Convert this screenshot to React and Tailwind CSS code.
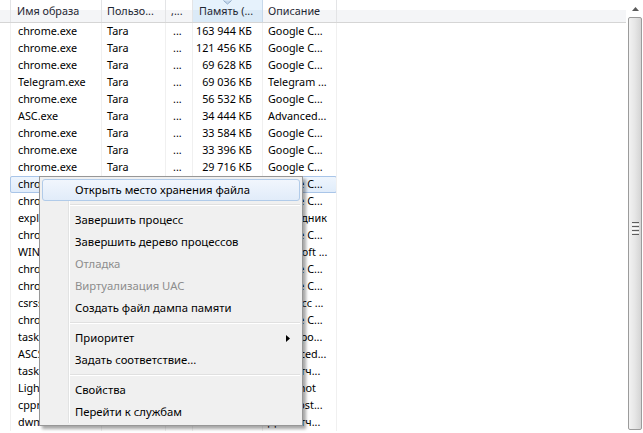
const rows = [
  ["chrome.exe", "Tara", "...", "163 944 КБ", "Google C..."],
  ["chrome.exe", "Tara", "...", "121 456 КБ", "Google C..."],
  ["chrome.exe", "Tara", "...", "69 628 КБ", "Google C..."],
  ["Telegram.exe", "Tara", "...", "69 036 КБ", "Telegram ..."],
  ["chrome.exe", "Tara", "...", "56 532 КБ", "Google C..."],
  ["ASC.exe", "Tara", "...", "34 444 КБ", "Advanced..."],
  ["chrome.exe", "Tara", "...", "33 584 КБ", "Google C..."],
  ["chrome.exe", "Tara", "...", "33 396 КБ", "Google C..."],
  ["chrome.exe", "Tara", "...", "29 716 КБ", "Google C..."],
  ["chrome.exe", "Tara", "...", "28 104 КБ", "Google C..."],
  ["chrome.exe", "Tara", "...", "26 880 КБ", "Google C..."],
  ["explorer.exe", "Tara", "...", "25 412 КБ", "Проводник"],
  ["chrome.exe", "Tara", "...", "24 960 КБ", "Google C..."],
  ["WINWORD.EXE", "Tara", "...", "21 308 КБ", "Microsoft ..."],
  ["chrome.exe", "Tara", "...", "19 744 КБ", "Google C..."],
  ["chrome.exe", "Tara", "...", "17 236 КБ", "Google C..."],
  ["csrss.exe", "", "...", "15 620 КБ", "Процесс ..."],
  ["chrome.exe", "Tara", "...", "14 092 КБ", "Google C..."],
  ["taskhost.exe", "Tara", "...", "9 868 КБ", "Хост-про..."],
  ["ASCService.exe", "", "...", "8 520 КБ", "Advanced..."],
  ["taskmgr.exe", "Tara", "...", "7 412 КБ", "Диспетч..."],
  ["Lightshot.exe", "Tara", "...", "6 980 КБ", "Lightshot"],
  ["cpprocess.exe", "Tara", "...", "5 204 КБ", "Win Host..."],
  ["dwm.exe", "Tara", "...", "3 916 КБ", "Диспетч..."],
];

function Header() {
  const cell =
    "h-full flex items-center border-r border-[#e3e4e6] text-[#1f2733] bg-[linear-gradient(to_bottom,#ffffff_0%,#ffffff_45%,#f4f5f7_45%,#f4f5f7_100%)]";
  return (
    <div className="flex h-[23px] border-b border-[#d5d5d5] shrink-0">
      <div className={`w-[11px] ${cell}`} />
      <div className={`w-[91px] pl-[6px] ${cell}`}>Имя образа</div>
      <div className={`w-[64px] pl-[5px] ${cell}`}>Пользо...</div>
      <div className={`w-[27px] pl-[5px] ${cell}`}>,...</div>
      <div className="relative w-[70px] pl-[6px] h-full flex items-center border-r border-[#c8d9ea] text-[#1f2733] bg-[linear-gradient(to_bottom,#e6f2fc_0%,#e6f2fc_45%,#dbeaf7_45%,#dbeaf7_100%)]">
        Память (...
        <svg className="absolute left-[30px] top-0" width="9" height="5" viewBox="0 0 9 5">
          <path d="M0.5 0.5 L4.5 4 L8.5 0.5" fill="#c5d8ec" stroke="#8fa9c6" strokeWidth="1" />
        </svg>
      </div>
      <div className={`w-[74px] pl-[5px] ${cell}`}>Описание</div>
      <div className="flex-1 h-full bg-[linear-gradient(to_bottom,#ffffff_0%,#ffffff_45%,#f4f5f7_45%,#f4f5f7_100%)]" />
    </div>
  );
}

function Row({ r, selected }) {
  const line = "h-full flex items-center border-r border-[#f0f0f0] overflow-hidden whitespace-nowrap";
  return (
    <div className="relative flex h-[17px] shrink-0">
      {selected && (
        <div className="absolute left-[10px] top-0 w-[327px] h-[17px] rounded-[2px] border border-[#a9c5e8] bg-linear-to-b from-[#eef5fd] to-[#e0ecfa]" />
      )}
      <div className={`w-[11px] ${line}`} />
      <div className={`relative w-[91px] pl-[7px] ${line}`}>{r[0]}</div>
      <div className={`relative w-[64px] pl-[5px] ${line}`}>{r[1]}</div>
      <div className={`relative w-[27px] pl-[7px] ${line}`}>{r[2]}</div>
      <div className={`relative w-[70px] pr-[10px] justify-end ${line}`}>{r[3]}</div>
      <div className={`relative w-[74px] pl-[5px] ${line}`}>{r[4]}</div>
      <div className="flex-1" />
    </div>
  );
}

function Scrollbar() {
  return (
    <div className="w-[17px] h-full flex flex-col bg-white">
      <div className="h-[17px] flex items-center justify-center pl-[2px]">
        <svg width="7" height="4" viewBox="0 0 7 4">
          <path d="M0 4 L3.5 0 L7 4 Z" fill="#5a5a5a" />
        </svg>
      </div>
      <div className="flex-1 ml-[2px] mr-[1px] mb-[3px] rounded-[2px] border border-[#9b9b9b] bg-linear-to-r from-[#f2f2f2] via-[#e6e6e6] to-[#d4d4d4] flex items-center justify-center">
        <div className="flex flex-col gap-[1px] mt-[10px]">
          <div className="w-[7px] h-[1px] bg-[#5e5e5e]" />
          <div className="w-[7px] h-[1px] bg-[#fafafa]" />
          <div className="w-[7px] h-[1px] bg-[#5e5e5e]" />
          <div className="w-[7px] h-[1px] bg-[#fafafa]" />
          <div className="w-[7px] h-[1px] bg-[#5e5e5e]" />
          <div className="w-[7px] h-[1px] bg-[#fafafa]" />
          <div className="w-[7px] h-[1px] bg-[#5e5e5e]" />
        </div>
      </div>
    </div>
  );
}

function Item({ children, disabled, hover, arrow }) {
  return (
    <div
      className={`relative h-[22px] mx-[2px] flex items-center pl-[32px] rounded-[3px] border ${
        hover
          ? "border-[#b1cbe9] bg-linear-to-b from-[#f1f6fd] to-[#e1ecf9]"
          : "border-transparent"
      } ${disabled ? "text-[#8d8d8d]" : "text-black"}`}
    >
      {children}
      {arrow && (
        <svg className="absolute right-[9px] top-[7px]" width="4" height="7" viewBox="0 0 4 7">
          <path d="M0 0 L4 3.5 L0 7 Z" fill="#000" />
        </svg>
      )}
    </div>
  );
}

function Sep() {
  return (
    <div className="h-[8px] flex flex-col justify-center pl-[30px] pr-[2px]">
      <div className="h-[1px] bg-[#e0e0e0]" />
      <div className="h-[1px] bg-white" />
    </div>
  );
}

function Menu() {
  return (
    <div className="absolute left-[39px] top-[176px] w-[264px] border border-[#979797] bg-[#f0f0f0] py-[2px] shadow-[3px_3px_3px_rgba(0,0,0,0.35)] text-[11.3px]">
      <div className="absolute left-[28px] top-[2px] bottom-[2px] w-[1px] bg-[#e2e3e3]" />
      <div className="absolute left-[29px] top-[2px] bottom-[2px] w-[1px] bg-white" />
      <Item hover>Открыть место хранения файла</Item>
      <Sep />
      <Item>Завершить процесс</Item>
      <Item>Завершить дерево процессов</Item>
      <Item disabled>Отладка</Item>
      <Item disabled>Виртуализация UAC</Item>
      <Item>Создать файл дампа памяти</Item>
      <Sep />
      <Item arrow>Приоритет</Item>
      <Item>Задать соответствие...</Item>
      <Sep />
      <Item>Свойства</Item>
      <Item>Перейти к службам</Item>
    </div>
  );
}

export default function App() {
  return (
    <div className="relative w-[643px] h-[433px] overflow-hidden bg-white text-black text-[10.8px] font-['Noto_Sans',sans-serif] leading-none">
      <div className="flex h-full">
        <div className="flex-1 flex flex-col min-w-0">
          <Header />
          {rows.map((r, i) => (
            <Row key={i} r={r} selected={i === 9} />
          ))}
        </div>
        <Scrollbar />
      </div>
      <Menu />
    </div>
  );
}
